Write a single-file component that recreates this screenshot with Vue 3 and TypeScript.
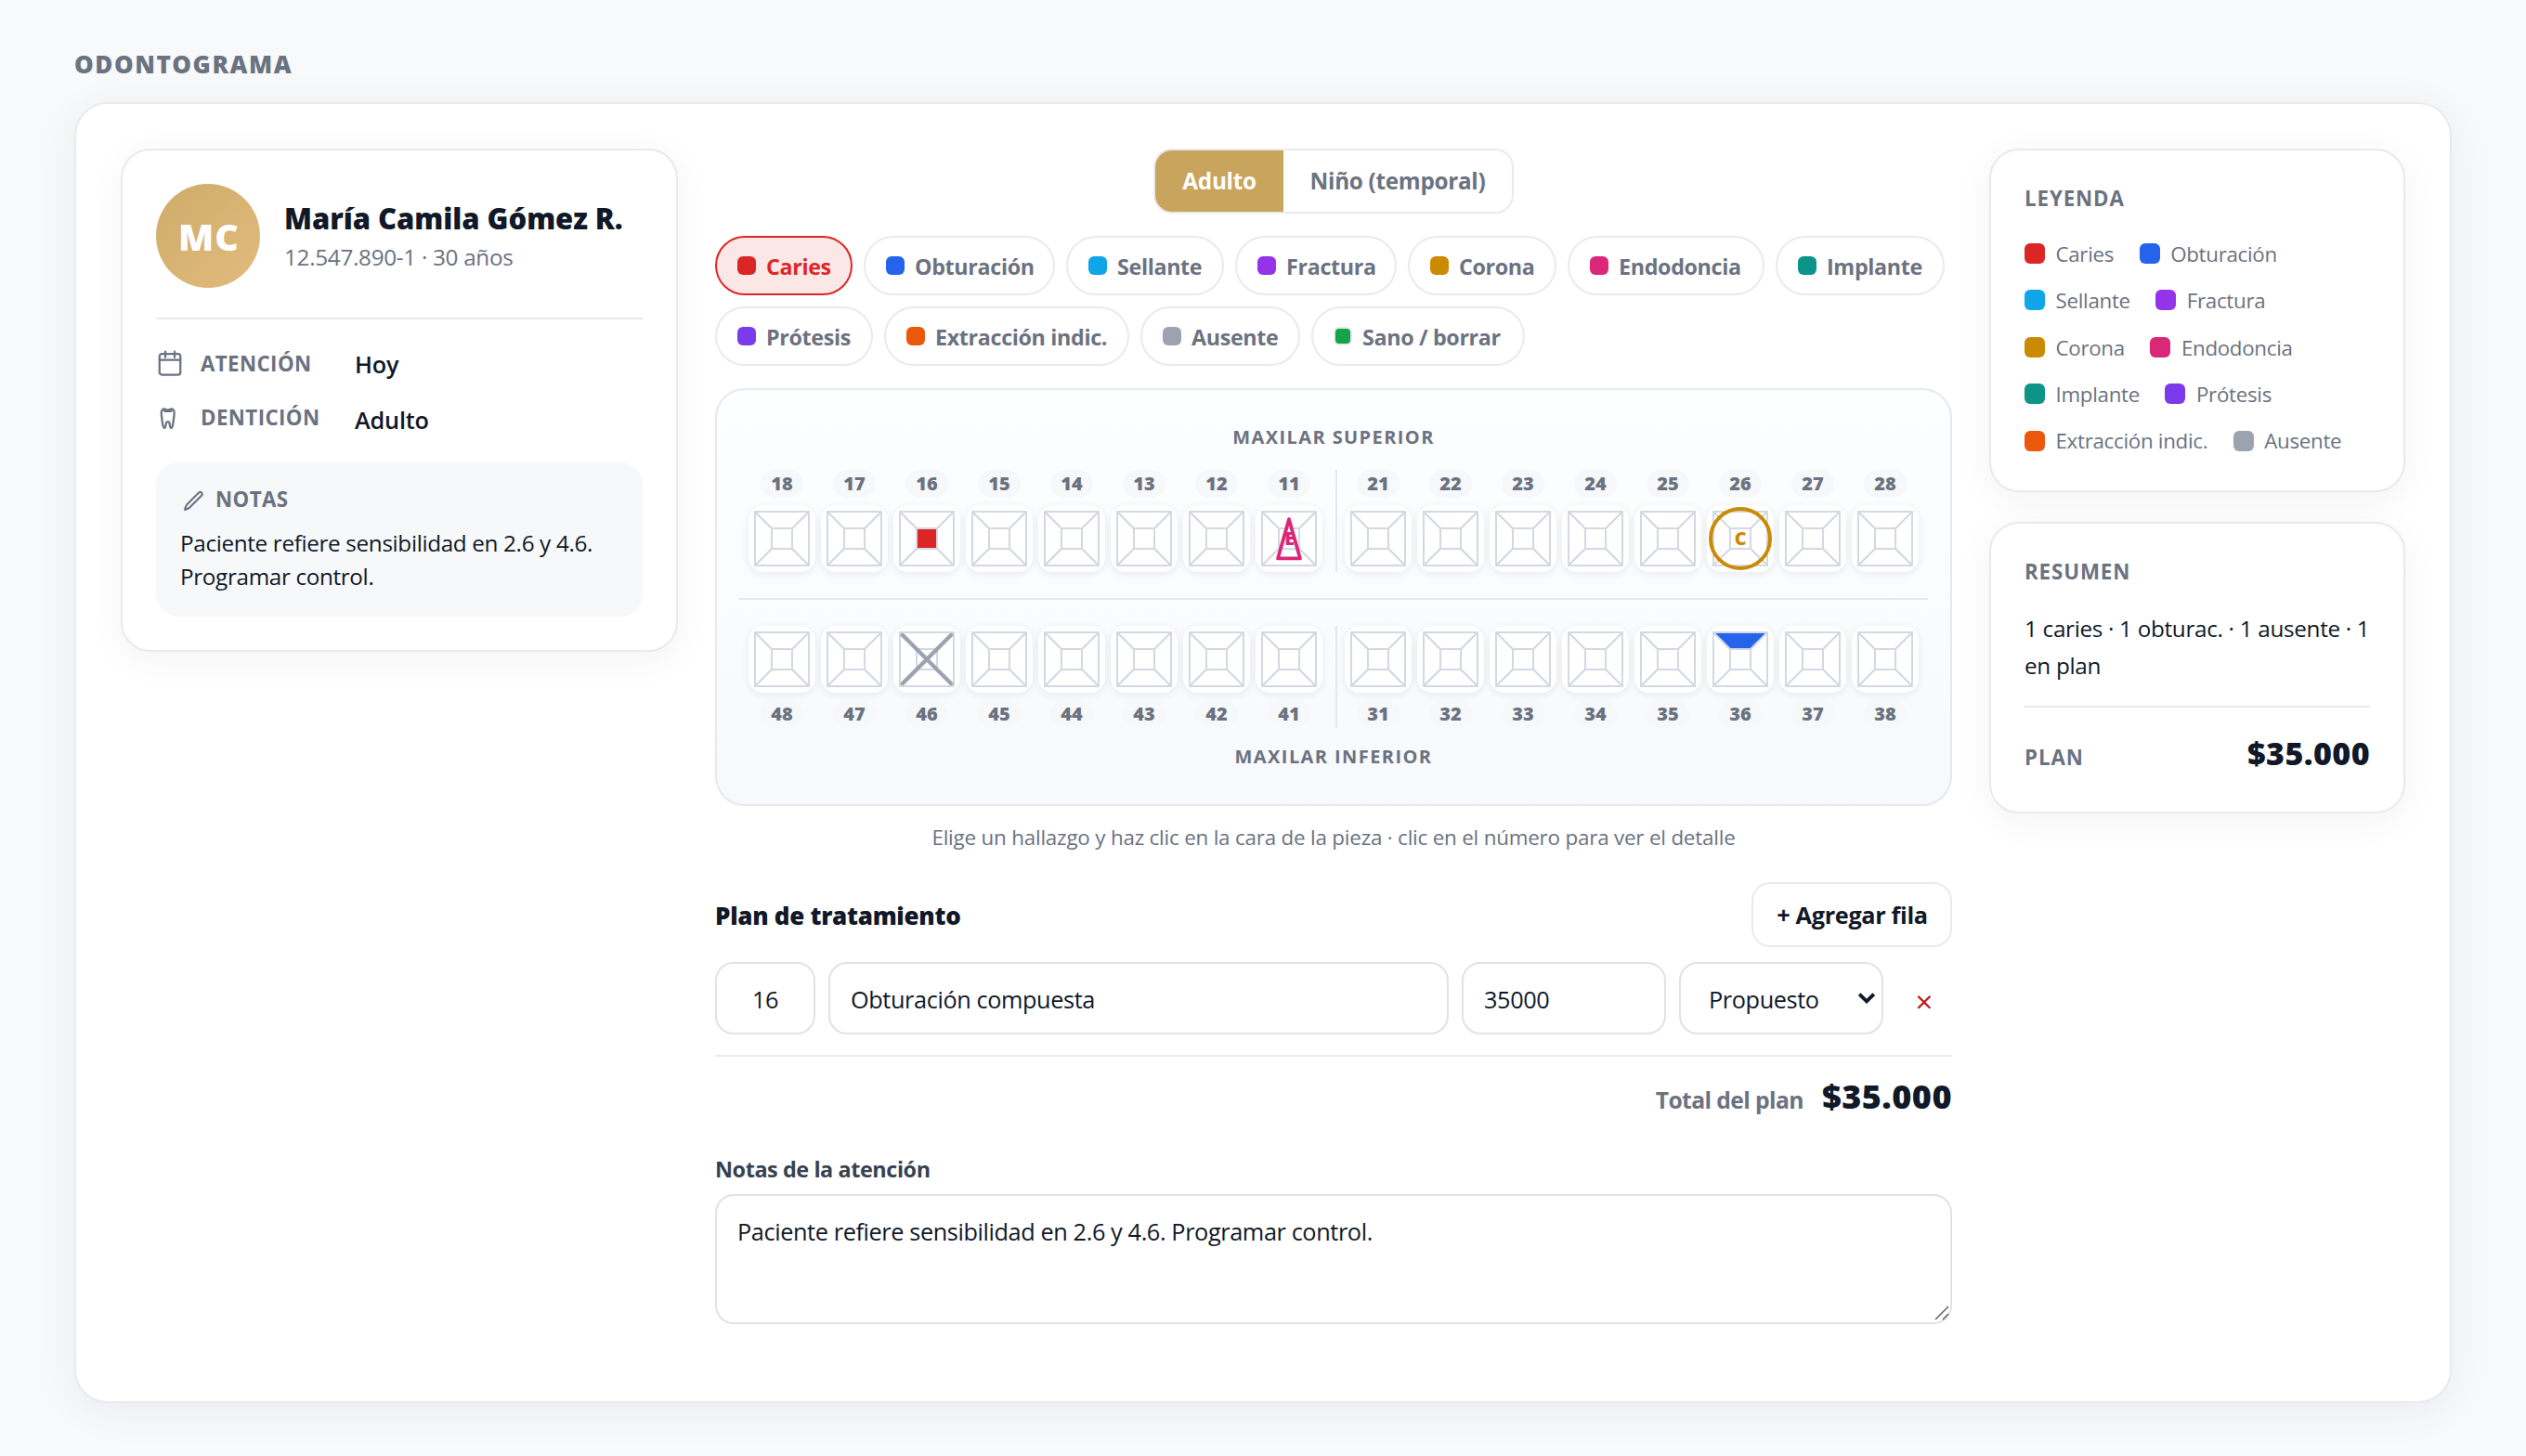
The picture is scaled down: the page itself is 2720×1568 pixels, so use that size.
<script setup lang="ts">
interface Finding {
  label: string
  color: string
  width: number
  outlined?: boolean
}

type Mark = 'caries' | 'endodoncia' | 'corona' | 'ausente' | 'obturacion'

const findings: Finding[] = [
  { label: 'Caries', color: '#dc2626', width: 148 },
  { label: 'Obturación', color: '#2563eb', width: 206 },
  { label: 'Sellante', color: '#0ea5e9', width: 170 },
  { label: 'Fractura', color: '#9333ea', width: 174 },
  { label: 'Corona', color: '#ca8a04', width: 160 },
  { label: 'Endodoncia', color: '#db2777', width: 212 },
  { label: 'Implante', color: '#0d9488', width: 182 },
  { label: 'Prótesis', color: '#7c3aed', width: 170 },
  { label: 'Extracción indic.', color: '#ea580c', width: 264 },
  { label: 'Ausente', color: '#9ca3af', width: 172 },
  { label: 'Sano / borrar', color: '#16a34a', width: 230, outlined: true },
]
const legend = findings.filter((f) => !f.outlined)
const activeFinding = 'Caries'

const arches = [
  {
    name: 'upper',
    halves: [
      [18, 17, 16, 15, 14, 13, 12, 11],
      [21, 22, 23, 24, 25, 26, 27, 28],
    ],
  },
  {
    name: 'lower',
    halves: [
      [48, 47, 46, 45, 44, 43, 42, 41],
      [31, 32, 33, 34, 35, 36, 37, 38],
    ],
  },
]

const marks: Record<number, Mark> = {
  16: 'caries',
  11: 'endodoncia',
  26: 'corona',
  46: 'ausente',
  36: 'obturacion',
}

const centerFill = (n: number) => (marks[n] === 'caries' ? '#dc2626' : '#fff')
const topFill = (n: number) => (marks[n] === 'obturacion' ? '#2563eb' : '#fff')
</script>

<template>
  <main class="page">
    <h1 class="page-title">ODONTOGRAMA</h1>
    <section class="board">
      <aside class="card patient">
        <header class="patient-head">
          <div class="avatar">MC</div>
          <div>
            <h2 class="patient-name">María Camila Gómez R.</h2>
            <p class="patient-sub">12.547.890-1 · 30 años</p>
          </div>
        </header>
        <div class="facts">
          <div class="fact">
            <svg class="fact-icon" viewBox="0 0 24 24" fill="none" stroke="currentColor" stroke-width="1.8" stroke-linecap="round" stroke-linejoin="round">
              <rect x="3" y="4" width="18" height="18" rx="2" />
              <path d="M16 2v5M8 2v5M3 9.2h18" />
            </svg>
            <span class="caps">ATENCIÓN</span>
            <span class="fact-value">Hoy</span>
          </div>
          <div class="fact fact-teeth">
            <svg class="fact-icon" viewBox="0 0 30 30" fill="none" stroke="currentColor" stroke-width="2.3" stroke-linecap="round" stroke-linejoin="round">
              <path d="M12.7 6.4C10.8 4.8 8.8 4.3 7.7 4.6 5.5 5.2 5.5 8.5 6 12c.5 3 .6 6 1.2 9 .4 2.6 1 3.8 2 3.8 1.4 0 1.2-3.6 1.8-5.4.6-1.7 2.800-1.700 3.400 0 .6 1.800.4 5.400 1.800 5.400 1 0 1.600-1.200 2-3.800.6-3 .7-6 1.200-9 .5-3.500.5-6.800-1.700-7.400-1.100-.3-3.100.2-5 1.800z" />
              <path d="M9.600 6.200h6.200" stroke-width="3.400" />
            </svg>
            <span class="caps">DENTICIÓN</span>
            <span class="fact-value">Adulto</span>
          </div>
        </div>
        <div class="notes">
          <div class="notes-head">
            <svg class="notes-icon" viewBox="0 0 26 26" fill="none" stroke="currentColor" stroke-width="2.1" stroke-linecap="round" stroke-linejoin="round">
              <path d="M20.100 5.500a2.200 2.200 0 0 1 3.100 3.100L10.200 21.600Q8 23.400 5.100 23.900 5.600 21 7.100 18.500z" />
            </svg>
            <span class="caps">NOTAS</span>
          </div>
          <p class="notes-text">Paciente refiere sensibilidad en 2.6 y 4.6. Programar control.</p>
        </div>
      </aside>

      <div class="work">
        <div class="toggle">
          <button class="toggle-item on">Adulto</button>
          <button class="toggle-item wide">Niño (temporal)</button>
        </div>

        <div class="chips">
          <button
            v-for="f in findings"
            :key="f.label"
            class="chip"
            :class="{ active: f.label === activeFinding }"
            :style="{ width: f.width + 'px' }"
          >
            <i class="swatch" :class="{ outlined: f.outlined }" :style="{ backgroundColor: f.color }"></i>
            <span>{{ f.label }}</span>
          </button>
        </div>

        <div class="chart">
          <p class="arch-name">MAXILAR SUPERIOR</p>
          <template v-for="(arch, a) in arches" :key="arch.name">
            <div v-if="a === 1" class="arch-divider"></div>
            <div class="arch" :class="arch.name">
              <div v-for="(half, h) in arch.halves" :key="h" class="half">
                <div v-for="n in half" :key="n" class="tooth">
                  <span class="tooth-number">{{ n }}</span>
                  <svg class="tooth-face" viewBox="0 0 72 72">
                    <g stroke="#d3d8e2" stroke-width="2" fill="#fff" stroke-linejoin="round">
                      <path d="M7 7 25 25V47L7 65z" />
                      <path d="M65 7 47 25V47L65 65z" />
                      <path d="M7 65 25 47H47L65 65z" />
                      <path d="M7 7H65L47 25H25z" :fill="topFill(n)" />
                      <path d="M25 25H47V47H25z" :fill="centerFill(n)" />
                    </g>
                    <g v-if="marks[n] === 'endodoncia'">
                      <path d="M36 15.200 48 57.400H24z" fill="none" stroke="#db2777" stroke-width="3.800" stroke-linejoin="round" />
                      <text x="36.500" y="43" fill="#db2777">E</text>
                    </g>
                    <g v-else-if="marks[n] === 'corona'">
                      <circle cx="36" cy="36" r="32" fill="none" stroke="#ca8a04" stroke-width="4" />
                      <text x="36" y="43" fill="#ca8a04">C</text>
                    </g>
                    <path v-else-if="marks[n] === 'ausente'" d="M10 10 62 62M62 10 10 62" stroke="#9ca3af" stroke-width="4.400" stroke-linecap="round" />
                  </svg>
                </div>
              </div>
            </div>
          </template>
          <p class="arch-name bottom">MAXILAR INFERIOR</p>
        </div>
        <p class="hint">Elige un hallazgo y haz clic en la cara de la pieza · clic en el número para ver el detalle</p>

        <div class="plan-head">
          <h3>Plan de tratamiento</h3>
          <button class="add">+ Agregar fila</button>
        </div>
        <div class="plan-row">
          <div class="field centered"><span>16</span></div>
          <div class="field"><span>Obturación compuesta</span></div>
          <div class="field"><span>35000</span></div>
          <div class="field select">
            <span>Propuesto</span>
            <svg viewBox="0 0 20 14" fill="none" stroke="currentColor" stroke-width="3.800"><path d="M2.200 2.600 10 10.400 17.800 2.600" /></svg>
          </div>
          <button class="remove">×</button>
        </div>
        <div class="plan-total">
          <span class="total-label">Total del plan</span>
          <strong>$35.000</strong>
        </div>

        <label class="area-label">Notas de la atención</label>
        <div class="area">
          <span>Paciente refiere sensibilidad en 2.6 y 4.6. Programar control.</span>
          <svg class="grip" viewBox="0 0 16 16" fill="none" stroke="#555" stroke-width="1.400"><path d="M1 15 15 1M9 15 15 9" /></svg>
        </div>
      </div>

      <aside class="side">
        <section class="card side-card legend-card">
          <h4 class="caps heading">LEYENDA</h4>
          <ul class="legend">
            <li v-for="f in legend" :key="f.label">
              <i class="swatch large" :style="{ backgroundColor: f.color }"></i><span>{{ f.label }}</span>
            </li>
          </ul>
        </section>
        <section class="card side-card summary-card">
          <h4 class="caps heading">RESUMEN</h4>
          <p class="summary">1 caries · 1 obturac. · 1 ausente · 1 en plan</p>
          <div class="summary-plan">
            <span class="caps heading">PLAN</span>
            <strong>$35.000</strong>
          </div>
        </section>
      </aside>
    </section>
  </main>
</template>

<style>
body {
  background: #f8f9fb;
}
</style>

<style scoped>
.page,
.page * {
  box-sizing: border-box;
}
.page {
  min-height: 1568px;
  padding: 53px 80px 0;
  background: #f8f9fb;
  color: #111827;
  font-family: "Open Sans", "Noto Sans", sans-serif;
}
h1, h2, h3, h4, p, ul {
  margin: 0;
  padding: 0;
}
button {
  font-family: inherit;
  padding: 0;
  background: none;
  border: 0;
}
.page-title {
  font-size: 26px;
  line-height: 32px;
  font-weight: 800;
  letter-spacing: 1.55px;
  color: #6b7280;
}
.board {
  margin-top: 25px;
  height: 1401px;
  padding: 48px;
  display: grid;
  grid-template-columns: 600px 1332px 448px;
  gap: 40px;
  align-items: start;
  background: #fff;
  border: 2px solid #e9eaec;
  border-radius: 36px;
  box-shadow: 0 8px 48px rgba(16, 24, 40, 0.06);
}
.card {
  background: #fff;
  border: 2px solid #e9eaec;
  border-radius: 32px;
  box-shadow: 0 8px 40px rgba(0, 0, 0, 0.05);
}
.caps {
  font-size: 22.3px;
  line-height: 30px;
  font-weight: 700;
  letter-spacing: 0.4px;
  color: #6b7280;
}
.caps.heading {
  letter-spacing: 0.9px;
}

/* Patient card */
.patient {
  height: 542px;
  padding: 36px;
}
.patient-head {
  display: flex;
  align-items: center;
  gap: 26px;
  padding-bottom: 32px;
  border-bottom: 2px solid #e9eaec;
}
.avatar {
  width: 112px;
  height: 112px;
  padding: 1px 0 0 2px;
  border-radius: 50%;
  background: linear-gradient(135deg, #ceac6a, #e2bb7c);
  color: #fff;
  font-size: 39.5px;
  line-height: 112px;
  font-weight: 800;
  letter-spacing: 1px;
  text-align: center;
}
.patient-name {
  padding-top: 1px;
  font-size: 31px;
  line-height: 40px;
  font-weight: 800;
  letter-spacing: -0.05px;
}
.patient-sub {
  margin-top: 4px;
  font-size: 24.3px;
  line-height: 36px;
  letter-spacing: -0.31px;
  color: #6b7280;
}
.facts {
  padding: 30px 0 28px;
}
.fact {
  height: 36px;
  display: grid;
  grid-template-columns: 48px 166px 1fr;
  align-items: center;
  color: #6b7280;
}
.fact-icon {
  width: 30px;
  height: 30px;
  display: block;
  margin-bottom: 2px;
}
.fact-teeth {
  margin-top: 24px;
}
.fact-teeth .caps {
  padding-bottom: 4px;
}
.fact-value {
  font-size: 25.3px;
  line-height: 36px;
  font-weight: 550;
  letter-spacing: -0.2px;
  color: #111827;
}
.notes {
  height: 166px;
  padding: 25px 22px 24px 26px;
  border-radius: 24px;
  background: #f7f8fa;
}
.notes-head {
  display: flex;
  align-items: center;
  gap: 12px;
  color: #6b7280;
}
.notes-icon {
  width: 26px;
  height: 26px;
}
.notes-text {
  margin-top: 14px;
  font-size: 24.3px;
  line-height: 36px;
  letter-spacing: -0.36px;
}

/* Work area */
.work {
  display: flex;
  flex-direction: column;
}
.toggle {
  align-self: center;
  display: flex;
  height: 70px;
  border: 2px solid #e9eaec;
  border-radius: 20px;
  overflow: hidden;
}
.toggle-item {
  width: 138px;
  padding-bottom: 2px;
  font-size: 24.3px;
  font-weight: 700;
  letter-spacing: -0.3px;
  color: #6b7280;
}
.toggle-item.on {
  background: #c9a45c;
  color: #fff;
}
.toggle-item.wide {
  width: 246px;
}
.chips {
  margin-top: 24px;
  display: flex;
  flex-wrap: wrap;
  gap: 12px;
}
.chip {
  height: 64px;
  padding-left: 22px;
  display: flex;
  align-items: center;
  gap: 11px;
  border: 2px solid #e9eaec;
  border-radius: 32px;
  font-size: 23.3px;
  font-weight: 700;
  letter-spacing: -0.35px;
  white-space: nowrap;
  color: #6b7280;
}
.chip span {
  padding-top: 2px;
}
.chip.active {
  background: #fce7e7;
  border-color: #dc2626;
  color: #dc2626;
}
.swatch {
  flex: none;
  width: 20px;
  height: 20px;
  border-radius: 6px;
}
.swatch.large {
  width: 22px;
  height: 22px;
}
.swatch.outlined {
  border: 2px solid #e5e7eb;
}
.chart {
  margin-top: 24px;
  height: 450px;
  padding: 37px 24px 0;
  border: 2px solid #e7e8eb;
  border-radius: 32px;
  background: linear-gradient(180deg, #fdfeff, #f8f9fc);
}
.arch-name {
  font-size: 20px;
  line-height: 28px;
  font-weight: 700;
  letter-spacing: 1.42px;
  text-align: center;
  color: #6b7280;
}
.arch-name.bottom {
  margin-top: 17px;
}
.arch {
  display: flex;
  justify-content: center;
}
.arch.upper {
  margin-top: 21px;
}
.half {
  display: flex;
  gap: 6px;
}
.half:first-child {
  padding-right: 14px;
}
.half:last-child {
  padding-left: 8px;
  border-left: 2px solid #e5e7ea;
}
.tooth {
  width: 72px;
  display: flex;
  flex-direction: column;
  align-items: center;
  gap: 8px;
}
.lower .tooth {
  flex-direction: column-reverse;
}
.tooth-number {
  min-width: 44px;
  height: 30px;
  padding: 0 11px;
  border-radius: 15px;
  background: #f7f8fa;
  font-size: 20px;
  line-height: 29px;
  font-weight: 800;
  text-align: center;
  color: #6b7280;
}
.tooth-face {
  display: block;
  width: 72px;
  height: 72px;
  border-radius: 16px;
  background: #fff;
  box-shadow: 0 2px 8px rgba(16, 24, 40, 0.08);
}
.tooth-face text {
  font-size: 19.5px;
  font-weight: 800;
  text-anchor: middle;
}
.arch-divider {
  height: 2px;
  margin: 28px 0;
  background: #e7e8eb;
}
.hint {
  margin-top: 18px;
  font-size: 22.4px;
  line-height: 32px;
  letter-spacing: -0.2px;
  text-align: center;
  color: #6b7280;
}
.plan-head {
  margin-top: 32px;
  display: flex;
  align-items: center;
  justify-content: space-between;
}
.plan-head h3 {
  padding-top: 2px;
  font-size: 26px;
  line-height: 36px;
  font-weight: 800;
  letter-spacing: -0.28px;
}
.add {
  width: 216px;
  height: 70px;
  padding-left: 1px;
  border: 2px solid #e9eaec;
  border-radius: 20px;
  font-size: 25.3px;
  font-weight: 700;
  letter-spacing: -0.35px;
  color: #111827;
}
.plan-row {
  margin-top: 16px;
  display: grid;
  grid-template-columns: 108px 1fr 220px 220px 60px;
  gap: 14px;
}
.field {
  height: 78px;
  padding: 2px 22px 0;
  display: flex;
  align-items: center;
  border: 2px solid #e0e2e7;
  border-radius: 20px;
  font-size: 25.3px;
  letter-spacing: -0.4px;
}
.field.centered {
  justify-content: center;
}
.field.select {
  justify-content: space-between;
  padding: 2px 6px 0 30px;
}
.field.select svg {
  width: 20px;
  height: 14px;
  margin-bottom: 3px;
}
.remove {
  padding-top: 8px;
  font-size: 33px;
  line-height: 40px;
  color: #b91c1c;
}
.plan-total {
  margin-top: 22px;
  padding-top: 19px;
  border-top: 2px solid #e9eaec;
  display: flex;
  justify-content: flex-end;
  align-items: baseline;
  gap: 20px;
}
.total-label {
  font-size: 24.7px;
  font-weight: 700;
  letter-spacing: -0.6px;
  color: #6b7280;
}
.plan-total strong {
  font-size: 36px;
  line-height: 48px;
  font-weight: 800;
  letter-spacing: 0.49px;
}
.area-label {
  margin-top: 39px;
  font-size: 23.4px;
  line-height: 30px;
  font-weight: 700;
  letter-spacing: -0.42px;
  color: #374151;
}
.area {
  position: relative;
  margin-top: 12px;
  height: 140px;
  padding: 20px 22px;
  border: 2px solid #e0e2e7;
  border-radius: 20px;
  font-size: 25.3px;
  line-height: 36px;
  letter-spacing: -0.4px;
}
.grip {
  position: absolute;
  right: 1px;
  bottom: 2px;
  width: 16px;
  height: 16px;
}

/* Side column */
.side {
  display: flex;
  flex-direction: column;
  gap: 32px;
}
.side-card {
  padding: 37px 36px 35px;
}
.legend-card {
  height: 370px;
}
.summary-card {
  height: 314px;
}
.legend {
  margin-top: 27.8px;
  display: flex;
  flex-wrap: wrap;
  gap: 18px 27.5px;
  list-style: none;
}
.legend li {
  display: flex;
  align-items: center;
  gap: 11.5px;
  font-size: 22.3px;
  line-height: 32.4px;
  letter-spacing: -0.28px;
  color: #6b7280;
}
.legend li span {
  margin: 1px 0 -1px;
}
.summary {
  margin: 26px -8px 0 0;
  font-size: 24.3px;
  line-height: 40px;
  letter-spacing: -0.32px;
}
.summary-plan {
  margin-top: 23px;
  padding-top: 26px;
  border-top: 2px solid #e9eaec;
  display: flex;
  align-items: baseline;
  justify-content: space-between;
}
.summary-plan strong {
  font-size: 34px;
  line-height: 46px;
  font-weight: 800;
  letter-spacing: 0.41px;
}
</style>
